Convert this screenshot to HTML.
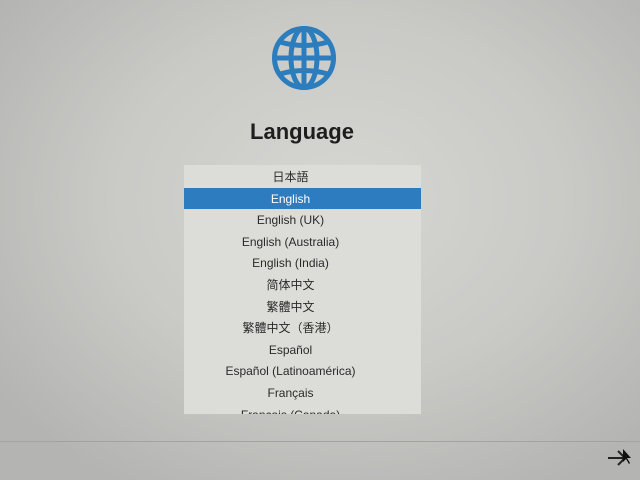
<!DOCTYPE html>
<html><head><meta charset="utf-8"><style>
html,body{margin:0;padding:0}
body{width:640px;height:480px;overflow:hidden;position:relative;font-family:"Liberation Sans","Noto Sans CJK SC",sans-serif;
background:radial-gradient(ellipse 420px 330px at 340px 200px,#d6d6d3 0%,#c9c9c6 55%,#b4b5b2 100%);}
.title{position:absolute;left:0;width:604px;top:119px;text-align:center;font-size:22px;font-weight:bold;color:#1e1e1e}
.list{position:absolute;left:184px;top:165px;width:237px;height:249px;background:#dcdcd9;overflow:hidden;padding-top:1px;box-sizing:border-box}
.row{height:21.6px;line-height:23px;text-align:center;font-size:12px;color:#2a2a2a;padding-right:24px}
.sel{background:#2c7cbf;color:#fff;margin-top:0}
.line{position:absolute;left:0;top:441px;width:640px;height:1px;background:#a3a4a2}
</style></head><body>
<svg style="position:absolute;left:271px;top:25px" width="66" height="66" viewBox="0 0 66 66">
<g fill="none" stroke="#2c7dbd" stroke-width="5">
<circle cx="33" cy="33" r="29.5"/>
<ellipse cx="33" cy="33" rx="13" ry="29.5"/>
<line x1="33" y1="4" x2="33" y2="62"/>
<line x1="4" y1="33" x2="62" y2="33"/>
<path d="M9 17 Q33 24 57 17"/>
<path d="M9 49 Q33 42 57 49"/>
</g></svg>
<div class="title">Language</div>
<div class="list">
<div class="row">日本語</div>
<div class="row sel">English</div>
<div class="row">English (UK)</div>
<div class="row">English (Australia)</div>
<div class="row">English (India)</div>
<div class="row">简体中文</div>
<div class="row">繁體中文</div>
<div class="row">繁體中文（香港）</div>
<div class="row">Español</div>
<div class="row">Español (Latinoamérica)</div>
<div class="row">Français</div>
<div class="row">Français (Canada)</div>
</div>
<div class="line"></div>
<svg style="position:absolute;left:606px;top:447px" width="26" height="20" viewBox="0 0 26 20">
<path d="M2 11 H18 M12 4 L19 11 L12 18" fill="none" stroke="#222" stroke-width="2"/>
<path d="M17 2 L17 15 L20 12 L23 17 L24 16 L21 11 L25 11 Z" fill="#111"/>
</svg>
</body></html>
